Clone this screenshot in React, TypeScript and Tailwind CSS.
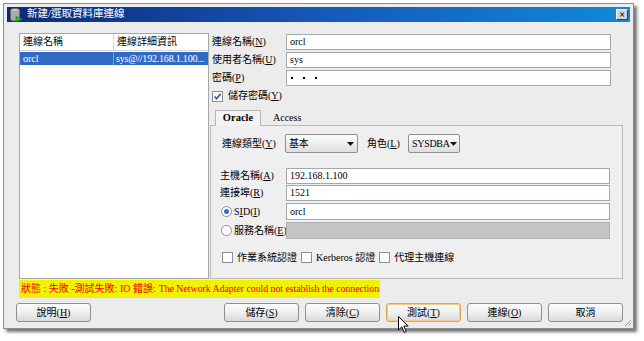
import React from 'react';

const font = "font-['Liberation_Serif','Noto_Sans_CJK_TC',serif]";

function Key({ k }: { k: string }) {
  return (
    <>
      (<span className="underline">{k}</span>)
    </>
  );
}

function Field({ value, w = 'w-[325px]', h = 'h-[16px]', gray = false, children }: { value?: string; w?: string; h?: string; gray?: boolean; children?: React.ReactNode }) {
  return (
    <div
      className={`${w} ${h} border flex items-center px-[3px] text-[10px] leading-none ${
        gray ? 'bg-[#c4c4c4] border-[#b0b0b0]' : 'bg-white border-[#a3a8ae]'
      }`}
    >
      {value}
      {children}
    </div>
  );
}

function Btn({ label, k, focus = false }: { label: string; k?: string; focus?: boolean }) {
  return (
    <div
      className={`w-[75px] h-[19px] rounded-[3px] border flex items-center justify-center text-[10px] leading-none text-black bg-linear-to-b from-[#fbfbfb] via-[#f0f0f0] to-[#d9d9d9] ${
        focus ? 'border-[#e0a450] shadow-[inset_0_0_0_1px_#f5c98a]' : 'border-[#8f8f8f]'
      }`}
    >
      {label}
      {k && <Key k={k} />}
    </div>
  );
}

function Check({ checked = false }: { checked?: boolean }) {
  return (
    <div className="w-[11px] h-[11px] border border-[#8a8f96] bg-white flex items-center justify-center shrink-0">
      {checked && (
        <svg width="9" height="9" viewBox="0 0 9 9">
          <path d="M1.5 4.5 L3.6 6.8 L7.6 1.8" fill="none" stroke="#2456c4" strokeWidth="1.7" />
        </svg>
      )}
    </div>
  );
}

function Radio({ on = false }: { on?: boolean }) {
  return (
    <div className="w-[11px] h-[11px] rounded-full border border-[#8a8f96] bg-white flex items-center justify-center shrink-0">
      {on && <div className="w-[5px] h-[5px] rounded-full bg-[#3a6ad0]" />}
    </div>
  );
}

function Combo({ value, w }: { value: string; w: string }) {
  return (
    <div
      className={`${w} h-[19px] rounded-[2px] border border-[#8f8f8f] bg-linear-to-b from-[#fdfdfd] to-[#dedede] flex items-center justify-between px-[3px] text-[10px] leading-none whitespace-nowrap`}
    >
      <span className="tracking-[-0.3px]">{value}</span>
      <svg width="7" height="4" viewBox="0 0 7 4" className="shrink-0">
        <path d="M0 0 H7 L3.5 4 Z" fill="#111" />
      </svg>
    </div>
  );
}

function DbIcon() {
  return (
    <svg width="13" height="14" viewBox="0 0 13 14">
      <ellipse cx="5" cy="2.5" rx="4.5" ry="2" fill="#d8d8d8" stroke="#6a6a6a" strokeWidth="0.8" />
      <path d="M0.5 2.5 V11 A4.5 2 0 0 0 9.5 11 V2.5" fill="#a9a9a9" stroke="#6a6a6a" strokeWidth="0.8" />
      <path d="M6 8.5 L12.5 11.2 L6 13.8 Z" fill="#2fb52f" stroke="#1b7a1b" strokeWidth="0.6" />
    </svg>
  );
}

export default function App() {
  return (
    <div className={`relative w-[644px] h-[341px] bg-white overflow-hidden ${font}`}>
      {/* Window */}
      <div className="relative ml-[3px] mt-[3px] w-[631px] h-[326px] border border-[#8d8d8d] bg-[#ececec] p-[3px] flex flex-col shadow-[3px_3px_3px_rgba(0,0,0,0.55)]">
        {/* Title bar */}
        <div className="h-[15px] flex items-center bg-linear-to-r from-[#0c2a78] via-[#1658b8] to-[#1189d6] pl-[3px] pr-[2px]">
          <DbIcon />
          <span className="ml-[4px] text-white text-[10.5px] leading-none">新建/選取資料庫連線</span>
          <div className="ml-auto w-[12px] h-[11px] bg-[#d6d3cc] border border-t-white border-l-white border-r-[#404040] border-b-[#404040] flex items-center justify-center text-[10px] font-bold leading-none text-black">
            ×
          </div>
        </div>

        {/* Main area */}
        <div className="flex pt-[11px] pl-[12px] h-[257px]">
          {/* Connection list */}
          <div className="w-[190px] h-[246px] bg-white border border-[#a7a7a7] text-[10px] leading-none">
            <div className="flex h-[17px] border-b border-[#d5d5d5]">
              <div className="w-[94px] border-r border-[#d5d5d5] flex items-center pl-[3px]">連線名稱</div>
              <div className="flex-1 flex items-center pl-[3px]">連線詳細資訊</div>
            </div>
            <div className="flex h-[13px] mt-[1px] bg-[#316ac5] text-white">
              <div className="w-[94px] border-r border-[#7d9fd9] flex items-center pl-[3px]">orcl</div>
              <div className="flex-1 flex items-center pl-[2px] whitespace-nowrap overflow-hidden tracking-[-0.2px]">sys@//192.168.1.100...</div>
            </div>
          </div>

          {/* Right column */}
          <div className="ml-[1px] w-[413px] flex flex-col text-[10px] leading-none whitespace-nowrap">
            <div className="flex flex-col gap-[2px] pt-[1px]">
              <div className="flex items-center h-[16px]">
                <span className="w-[76px] pl-[2px]">連線名稱<Key k="N" /></span>
                <Field value="orcl" />
              </div>
              <div className="flex items-center h-[16px]">
                <span className="w-[76px] pl-[2px]">使用者名稱<Key k="U" /></span>
                <Field value="sys" />
              </div>
              <div className="flex items-center h-[16px]">
                <span className="w-[76px] pl-[2px]">密碼<Key k="P" /></span>
                <Field>
                  <div className="flex gap-[10px] pl-[1px]">
                    <span className="w-[2px] h-[2px] bg-black" />
                    <span className="w-[2px] h-[2px] bg-black" />
                    <span className="w-[2px] h-[2px] bg-black" />
                  </div>
                </Field>
              </div>
            </div>
            <div className="flex items-center gap-[5px] mt-[4px] h-[12px] pl-[2px]">
              <Check checked />
              <span>儲存密碼<Key k="Y" /></span>
            </div>

            {/* Tabs */}
            <div className="flex items-end mt-[8px] h-[15px] pl-[5px]">
              <div className="relative z-10 -mb-[1px] w-[46px] h-[16px] border border-b-0 border-[#b5b5b5] bg-[#f3f3f3] flex items-center justify-center font-bold text-[10.5px]">
                Oracle
              </div>
              <div className="ml-[12px] h-[15px] flex items-center">Access</div>
            </div>
            <div className="w-[413px] h-[154px] border border-[#b9b9b9] bg-[#efefef] flex flex-col">
              <div className="flex items-center mt-[8px] h-[19px] pl-[11px]">
                <span className="w-[63px]">連線類型<Key k="Y" /></span>
                <Combo value="基本" w="w-[73px]" />
                <span className="ml-[9px] w-[41px]">角色<Key k="L" /></span>
                <Combo value="SYSDBA" w="w-[52px]" />
              </div>
              <div className="flex items-center mt-[15px] h-[16px] pl-[9px]">
                <span className="w-[66px]">主機名稱<Key k="A" /></span>
                <Field value="192.168.1.100" w="w-[324px]" />
              </div>
              <div className="flex items-center mt-[1px] h-[16px] pl-[9px]">
                <span className="w-[66px]">連接埠<Key k="R" /></span>
                <Field value="1521" w="w-[324px]" />
              </div>
              <div className="flex items-center mt-[2px] h-[17px] pl-[10px]">
                <span className="w-[65px] flex items-center gap-[2px]">
                  <Radio on />
                  <span>S<span className="underline">I</span>D<Key k="I" /></span>
                </span>
                <Field value="orcl" w="w-[324px]" h="h-[17px]" />
              </div>
              <div className="flex items-center mt-[2px] h-[17px] pl-[10px]">
                <span className="w-[65px] flex items-center gap-[2px]">
                  <Radio />
                  <span>服務名稱<Key k="E" /></span>
                </span>
                <Field w="w-[324px]" h="h-[17px]" gray />
              </div>
              <div className="flex items-center mt-[13px] h-[11px] pl-[11px]">
                <Check />
                <span className="ml-[4px]">作業系統認證</span>
                <span className="ml-[4px]"><Check /></span>
                <span className="ml-[4px]">Kerberos 認證</span>
                <span className="ml-[4px]"><Check /></span>
                <span className="ml-[4px]">代理主機連線</span>
              </div>
            </div>
          </div>
        </div>

        {/* Status */}
        <div className="ml-[12px] mt-[1px] w-[361px] h-[18px] bg-[#f2f200] flex items-center pl-[2px] text-[10px] leading-none text-[#f00000] whitespace-nowrap overflow-hidden">
          狀態 : 失敗 -測試失敗: IO 錯誤:{' '}
          <span className="ml-[3px] tracking-[-0.1px]">The Network Adapter could not establish the connection</span>
        </div>

        {/* Buttons */}
        <div className="flex items-center mt-[5px] pl-[9px] pr-[7px]">
          <Btn label="說明" k="H" />
          <div className="ml-auto flex gap-[6px]">
            <Btn label="儲存" k="S" />
            <Btn label="清除" k="C" />
            <Btn label="測試" k="T" focus />
            <Btn label="連線" k="O" />
            <Btn label="取消" />
          </div>
        </div>

        {/* Resize grip */}
        <svg className="absolute right-[1px] bottom-[1px]" width="9" height="9" viewBox="0 0 9 9">
          <path d="M8 2 L2 8 M8 5 L5 8" stroke="#a8a8a8" strokeWidth="1" />
        </svg>
      </div>

      {/* Mouse cursor */}
      <svg className="absolute left-[398px] top-[316px]" width="12" height="18" viewBox="0 0 12 18">
        <path d="M0.5 0.5 L0.5 14 L3.8 10.8 L6.2 16.5 L8.2 15.6 L5.8 10 L10.2 10 Z" fill="#fff" stroke="#000" strokeWidth="1" />
      </svg>
    </div>
  );
}
